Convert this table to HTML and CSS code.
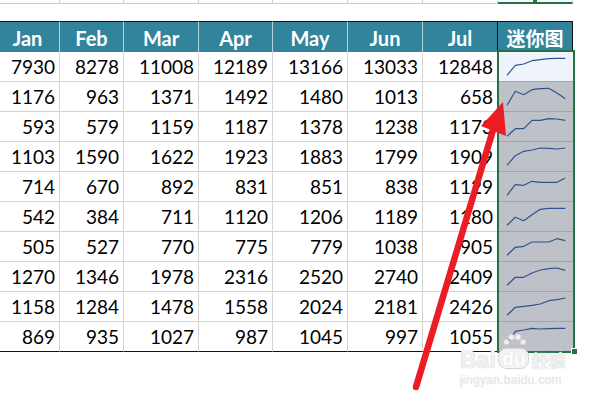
FILE: index.html
```html
<!DOCTYPE html>
<html>
<head>
<meta charset="utf-8">
<link rel="stylesheet" href="styles.css">
</head>
<body>
<div class="sheet">
  <div class="toprow">
    <div class="tc"></div><div class="tc"></div><div class="tc"></div><div class="tc"></div>
    <div class="tc"></div><div class="tc"></div><div class="tc"></div><div class="tc tc-sel"><span class="tdot"></span></div>
  </div>
  <div class="grid">
    <div class="hc">Jan</div><div class="hc">Feb</div><div class="hc">Mar</div><div class="hc">Apr</div>
    <div class="hc">May</div><div class="hc">Jun</div><div class="hc hc-jul">Jul</div><div class="hc hc-spark">迷你图</div>

    <div class="c">7930</div><div class="c">8278</div><div class="c">11008</div><div class="c">12189</div><div class="c">13166</div><div class="c">13033</div><div class="c">12848</div>
    <div class="s s-active"><svg viewBox="0 0 75 29"><polyline points="9,23.3 17.3,13.3 25.7,12 34,8.7 42.3,7.7 50.7,6.7 59,6.3 67.3,6.3"/></svg></div>

    <div class="c">1176</div><div class="c">963</div><div class="c">1371</div><div class="c">1492</div><div class="c">1480</div><div class="c">1013</div><div class="c">658</div>
    <div class="s"><svg viewBox="0 0 75 29"><polyline points="9,23.3 17.3,9.3 25.7,12.7 34,7.7 42.3,6.7 50.7,6.3 59,11 67.3,16.7"/></svg></div>

    <div class="c">593</div><div class="c">579</div><div class="c">1159</div><div class="c">1187</div><div class="c">1378</div><div class="c">1238</div><div class="c">1173</div>
    <div class="s"><svg viewBox="0 0 75 29"><polyline points="9,24.3 17.3,16.7 25.7,16.7 34,8.3 42.3,8.3 50.7,6.7 59,7 67.3,8.3"/></svg></div>

    <div class="c">1103</div><div class="c">1590</div><div class="c">1622</div><div class="c">1923</div><div class="c">1883</div><div class="c">1799</div><div class="c">1909</div>
    <div class="s"><svg viewBox="0 0 75 29"><polyline points="9,23.3 17.3,13.7 25.7,9.3 34,8 42.3,6 50.7,6.3 59,7 67.3,6"/></svg></div>

    <div class="c">714</div><div class="c">670</div><div class="c">892</div><div class="c">831</div><div class="c">851</div><div class="c">838</div><div class="c">1129</div>
    <div class="s"><svg viewBox="0 0 75 29"><polyline points="9,23.3 17.3,12.7 25.7,13.3 34,9.3 42.3,10.3 50.7,10.3 59,10.3 67.3,6"/></svg></div>

    <div class="c">542</div><div class="c">384</div><div class="c">711</div><div class="c">1120</div><div class="c">1206</div><div class="c">1189</div><div class="c">1180</div>
    <div class="s"><svg viewBox="0 0 75 29"><polyline points="9,23.3 17.3,15.3 25.7,18.7 34,12.7 42.3,7.3 50.7,6.3 59,6.3 67.3,6.3"/></svg></div>

    <div class="c">505</div><div class="c">527</div><div class="c">770</div><div class="c">775</div><div class="c">779</div><div class="c">1038</div><div class="c">905</div>
    <div class="s"><svg viewBox="0 0 75 29"><polyline points="9,23.3 17.3,15.3 25.7,14.3 34,10 42.3,10 50.7,10 59,6.7 67.3,8.7"/></svg></div>

    <div class="c">1270</div><div class="c">1346</div><div class="c">1978</div><div class="c">2316</div><div class="c">2520</div><div class="c">2740</div><div class="c">2409</div>
    <div class="s"><svg viewBox="0 0 75 29"><polyline points="9,23.3 17.3,15.3 25.7,15.3 34,11 42.3,8 50.7,6.7 59,6 67.3,8.3"/></svg></div>

    <div class="c">1158</div><div class="c">1284</div><div class="c">1478</div><div class="c">1558</div><div class="c">2024</div><div class="c">2181</div><div class="c">2426</div>
    <div class="s"><svg viewBox="0 0 75 29"><polyline points="9,23.3 17.3,15.3 25.7,14.3 34,13.3 42.3,12 50.7,8.7 59,7.7 67.3,6"/></svg></div>

    <div class="c c-last">869</div><div class="c c-last">935</div><div class="c c-last">1027</div><div class="c c-last">987</div><div class="c c-last">1045</div><div class="c c-last">997</div><div class="c c-last">1055</div>
    <div class="s s-last"><svg viewBox="0 0 75 29"><polyline points="9,21 17.3,9.3 25.7,8 34,6.3 42.3,7 50.7,6.7 59,6.3 67.3,6.3"/></svg></div>
  </div>

  <div class="selection"></div>
  <div class="handle"></div>

  <div class="watermark">
    <div class="wm-top">
      <span class="wm-bai">Bai</span>
      <span class="wm-paw">
        <svg viewBox="0 0 30 18" class="paw-svg">
          <circle cx="6" cy="11" r="3.2"/><circle cx="12" cy="5" r="3.4"/><circle cx="20" cy="5" r="3.4"/><circle cx="26" cy="11" r="3.2"/>
        </svg>
        <span class="wm-du">du</span>
      </span>
      <span class="wm-cn">经验</span>
    </div>
    <div class="wm-url">jingyan.baidu.com</div>
  </div>

  <svg class="arrow" viewBox="0 0 600 400" width="600" height="400">
    <line x1="416" y1="387" x2="493" y2="130" stroke="#ec1c24" stroke-width="6.5" stroke-linecap="round"/>
    <polygon points="503,102 481,126 506,136" fill="#ec1c24"/>
  </svg>
</div>
</body>
</html>
```

FILE: styles.css
```css
* { box-sizing: border-box; }
html, body { margin: 0; padding: 0; background: #ffffff; }
body { width: 600px; height: 400px; overflow: hidden; }

.sheet {
  position: relative;
  width: 600px;
  height: 400px;
  overflow: hidden;
  font-family: "Lato", "Noto Sans CJK SC", sans-serif;
}

.toprow {
  display: grid;
  grid-template-columns: 64px 64px 75px 74px 75px 75px 75px 75px;
  margin-left: -4px;
  height: 4px;
}
.tc {
  border-right: 1px solid #d0d0d0;
  border-bottom: 1px solid #c8c8c8;
}
.tc-sel {
  position: relative;
  border-bottom: 2px solid #217346;
  border-right: 1px solid #d0d0d0;
}
.tdot {
  position: absolute;
  left: 35px;
  top: -1px;
  width: 4px;
  height: 3px;
  background: #217346;
}

.grid {
  display: grid;
  grid-template-columns: 64px 64px 75px 74px 75px 75px 75px 75px;
  grid-template-rows: 31px repeat(10, 30px);
  margin-left: -4px;
  margin-top: 17px;
  width: 577px;
}

.hc {
  background: #31849b;
  color: #ffffff;
  font-weight: 700;
  font-size: 20px;
  display: flex;
  align-items: center;
  justify-content: center;
  border-top: 1px solid #111111;
  border-right: 1px solid #b8d3da;
  padding-top: 1px;
}
.hc-jul { border-right: 1px solid #111111; }
.hc-spark {
  border-right: 1px solid #111111;
  font-family: "Noto Sans CJK SC", sans-serif;
  font-size: 19px;
  padding-top: 0;
}

.c {
  font-size: 19px;
  line-height: 20px;
  color: #000000;
  display: flex;
  align-items: center;
  justify-content: flex-end;
  padding-right: 4px;
  border-right: 1px solid #d4d4d4;
  border-bottom: 1px solid #d4d4d4;
}
.c-last { border-bottom: 1px solid #111111; }

.s {
  background: #bfc1c8;
  border-bottom: 1px solid #a3a4aa;
}
.s-active { background: #eef3fc; }
.s-last { border-bottom: none; }
.s svg {
  display: block;
  width: 75px;
  height: 29px;
}
.s polyline {
  fill: none;
  stroke: #2f528f;
  stroke-width: 1.2;
  stroke-linejoin: round;
}

.selection {
  position: absolute;
  left: 497px;
  top: 50px;
  width: 78px;
  height: 303px;
  border: 2px solid #217346;
  pointer-events: none;
}
.handle {
  position: absolute;
  left: 571px;
  top: 348px;
  width: 7px;
  height: 7px;
  background: #217346;
  border: 1px solid #ffffff;
}

.watermark {
  position: absolute;
  left: 460px;
  top: 333px;
  width: 135px;
  color: #f1f1f1;
  pointer-events: none;
}
.wm-top {
  display: flex;
  align-items: flex-end;
  height: 36px;
}
.wm-bai {
  font-family: "Liberation Sans", sans-serif;
  font-weight: 700;
  font-size: 23px;
  line-height: 17px;
  text-shadow: 0 0 1px #cfcfcf, 0 0 1px #cfcfcf;
}
.wm-paw {
  position: relative;
  display: flex;
  flex-direction: column;
  align-items: center;
  width: 32px;
  margin-left: 2px;
}
.paw-svg {
  width: 26px;
  height: 15px;
  fill: #f1f1f1;
  stroke: #d2d2d2;
  stroke-width: 1;
}
.wm-du {
  font-family: "Liberation Sans", sans-serif;
  font-weight: 700;
  font-size: 19px;
  line-height: 19px;
  padding: 0 3px;
  border: 1.5px solid #d6d6d6;
  border-radius: 8px;
  background: #f3f3f3;
  color: #ffffff;
  text-shadow: 0 0 1px #cfcfcf;
}
.wm-cn {
  font-family: "Noto Sans CJK SC", sans-serif;
  font-weight: 700;
  font-size: 17px;
  line-height: 18px;
  margin-left: 2px;
  text-shadow: 0 0 1px #cfcfcf, 0 0 1px #cfcfcf;
}
.wm-url {
  font-family: "Liberation Sans", sans-serif;
  font-size: 12px;
  line-height: 13px;
  margin-top: 5px;
  letter-spacing: 0.3px;
  color: #ececec;
  text-shadow: 0 0 1px #d4d4d4;
}

.arrow {
  position: absolute;
  left: 0;
  top: 0;
  pointer-events: none;
}
```
